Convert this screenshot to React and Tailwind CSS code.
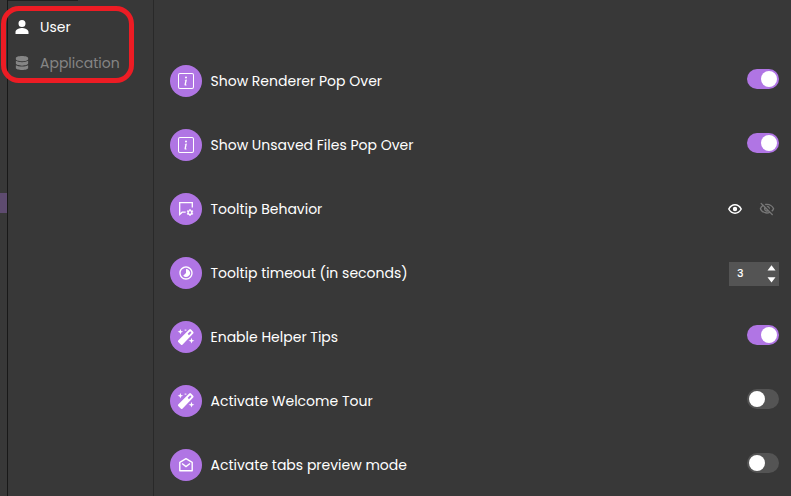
import { BsInfoSquare } from "react-icons/bs";
import { FaDatabase } from "react-icons/fa";
import { IoPersonSharp } from "react-icons/io5";
import { MdTimelapse, MdOutlineVisibilityOff } from "react-icons/md";

function MessageCog() {
  return (
    <svg width="16" height="16" viewBox="0 0 16 16" fill="none" stroke="currentColor" strokeWidth="1.3">
      <path d="M14.3 6.5V1.7H1.7v11.8l2.5-2.3H7.7" />
      <circle cx="12" cy="11.5" r="1.9" strokeWidth="1.4" />
      <path strokeWidth="1.3" d="M12 8v1.4M12 13.6V15M9 9.8l1.2.7M13.8 12.5l1.2.7M9 13.2l1.2-.7M13.8 10.5l1.2-.7" />
    </svg>
  );
}

function Wand() {
  return (
    <svg width="18" height="18" viewBox="0 0 18 18" fill="none">
      <path d="M1.2 12.6 12.2 1.5q.9-.8 1.8 0l2.2 2.2q.8.9 0 1.8L5.4 16.8q-.7.6-1.4 0l-2.8-2.8q-.6-.7 0-1.4Z" fill="currentColor" />
      <path d="m11.3 6.5 2.5-2.5" stroke="#b075e4" strokeWidth="1.8" />
      <path d="m3.4 1 .7 2 2.1.8-2.1.7-.7 2.1-.8-2.1L.6 3.8 2.6 3ZM14.5 9.8l.8 2.1 2.1.8-2.1.8-.8 2.1-.8-2.1-2.1-.8 2.1-.8Z" fill="currentColor" />
      <path d="M7 2.1 8.5 1.5l1.5.6-1.5.7Z" fill="currentColor" />
    </svg>
  );
}

function OpenMail() {
  return (
    <svg width="16" height="16" viewBox="0 0 16 16" fill="none" stroke="currentColor" strokeWidth="1.4">
      <path d="M1.8 5.3 8 1.7l6.2 3.6v8.4H1.8Z" strokeLinejoin="round" />
      <path d="m4 6.5 4 3.1 4-3.1" />
    </svg>
  );
}

function Eye() {
  return (
    <svg width="16" height="16" viewBox="0 0 16 16" fill="none" stroke="currentColor" strokeWidth="1.5">
      <path d="M1.8 8Q4 3.8 8 3.8T14.2 8Q12 12.2 8 12.2T1.8 8Z" />
      <circle cx="8" cy="8" r="2.2" fill="currentColor" stroke="none" />
    </svg>
  );
}

function Switch({ on }) {
  return (
    <div className={`-mt-1 flex h-5 w-8 items-center rounded-full px-0.5 ${on ? "justify-end bg-[#b075e4]" : "bg-[#545454]"}`}>
      <div className="size-4 rounded-full bg-white" />
    </div>
  );
}

function Visibility() {
  return (
    <div className="flex items-center gap-4 pr-1 text-white">
      <Eye />
      <MdOutlineVisibilityOff size={16} className="text-[#777777]" />
    </div>
  );
}

function Stepper() {
  return (
    <div className="mt-0.5 flex h-6 w-[50px] items-center justify-between bg-[#545454] pr-[3px] pl-2 text-[11px] font-medium text-white">
      <span>3</span>
      <svg width="9" height="18" viewBox="0 0 9 18" fill="currentColor">
        <path d="M.5 5.5 4.5.2l4 5.3ZM.5 12.2h8l-4 5.2Z" />
      </svg>
    </div>
  );
}

const rows = [
  { label: "Show Renderer Pop Over", icon: <BsInfoSquare size={16} />, control: <Switch on /> },
  { label: "Show Unsaved Files Pop Over", icon: <BsInfoSquare size={16} />, control: <Switch on /> },
  { label: "Tooltip Behavior", icon: <MessageCog />, control: <Visibility /> },
  { label: "Tooltip timeout (in seconds)", icon: <MdTimelapse size={16} />, control: <Stepper /> },
  { label: "Enable Helper Tips", icon: <Wand />, control: <Switch on /> },
  { label: "Activate Welcome Tour", icon: <Wand />, control: <Switch /> },
  { label: "Activate tabs preview mode", icon: <OpenMail />, control: <Switch /> },
];

export default function App() {
  return (
    <div className="relative flex h-[496px] w-[791px] overflow-hidden bg-[#383838] font-[Poppins,Inter,sans-serif] text-sm text-white">
      <div className="flex w-2 shrink-0 flex-col border-r border-[#181818] pt-[193px]">
        <div className="h-5 bg-[#5e4b70]" />
      </div>
      <aside className="flex w-[146px] shrink-0 flex-col border-r border-[#292929]">
        <div className="h-px w-[70px] bg-[#202020]" />
        <nav className="flex flex-col pt-2 pl-1.5">
          <div className="flex h-9 items-center">
            <IoPersonSharp size={16} />
            <span className="ml-2.5">User</span>
          </div>
          <div className="flex h-9 items-center text-[#858585]">
            <FaDatabase size={14} className="ml-px" />
            <span className="ml-[11px]">Application</span>
          </div>
        </nav>
      </aside>
      <main className="flex flex-1 flex-col">
        <div className="ml-10 h-px bg-[#202020]" />
        <div className="flex flex-col pt-12 pr-3 pl-4">
          {rows.map((row) => (
            <div key={row.label} className="flex h-16 shrink-0 items-center">
              <div className="mt-0.5 flex size-8 items-center justify-center rounded-full bg-[#b075e4]">{row.icon}</div>
              <span className="mt-0.5 ml-2 pl-[0.5px]">{row.label}</span>
              <div className="mt-0.5 ml-auto">{row.control}</div>
            </div>
          ))}
        </div>
      </main>
      <div className="absolute top-[6px] left-[1px] h-[77px] w-[133px] rounded-[18px] border-[5px] border-[#ed1c24]" />
    </div>
  );
}
